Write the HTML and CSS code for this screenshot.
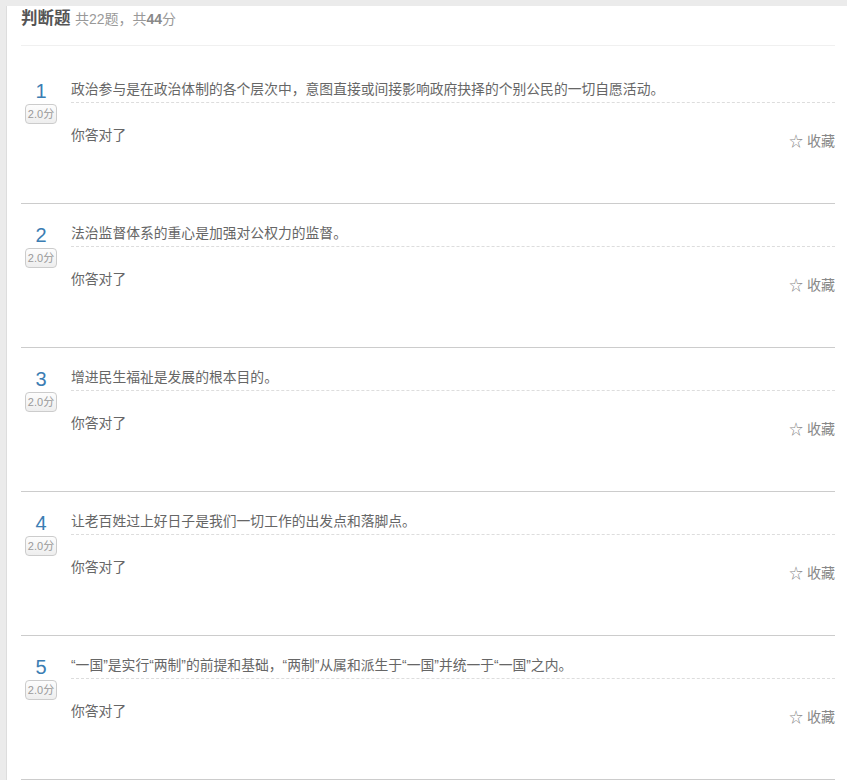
FILE: index.html
```html
<!DOCTYPE html>
<html>
<head>
<meta charset="utf-8">
<meta name="viewport" content="width=device-width, initial-scale=1.0">
<title>判断题</title>
<link rel="stylesheet" href="styles.css">
</head>
<body>
<div class="panel">
  <div class="type-head">
    <span class="type-name">判断题</span>
    <span class="type-info">共22题，共<b>44</b>分</span>
  </div>

  <div class="question">
    <div class="q-num">
      <span class="num">1</span>
      <span class="score">2.0分</span>
    </div>
    <div class="q-body">
      <div class="q-title">政治参与是在政治体制的各个层次中，意图直接或间接影响政府抉择的个别公民的一切自愿活动。</div>
      <div class="q-foot">
        <span class="result">你答对了</span>
        <span class="collect">☆ 收藏</span>
      </div>
    </div>
  </div>

  <div class="question">
    <div class="q-num">
      <span class="num">2</span>
      <span class="score">2.0分</span>
    </div>
    <div class="q-body">
      <div class="q-title">法治监督体系的重心是加强对公权力的监督。</div>
      <div class="q-foot">
        <span class="result">你答对了</span>
        <span class="collect">☆ 收藏</span>
      </div>
    </div>
  </div>

  <div class="question">
    <div class="q-num">
      <span class="num">3</span>
      <span class="score">2.0分</span>
    </div>
    <div class="q-body">
      <div class="q-title">增进民生福祉是发展的根本目的。</div>
      <div class="q-foot">
        <span class="result">你答对了</span>
        <span class="collect">☆ 收藏</span>
      </div>
    </div>
  </div>

  <div class="question">
    <div class="q-num">
      <span class="num">4</span>
      <span class="score">2.0分</span>
    </div>
    <div class="q-body">
      <div class="q-title">让老百姓过上好日子是我们一切工作的出发点和落脚点。</div>
      <div class="q-foot">
        <span class="result">你答对了</span>
        <span class="collect">☆ 收藏</span>
      </div>
    </div>
  </div>

  <div class="question">
    <div class="q-num">
      <span class="num">5</span>
      <span class="score">2.0分</span>
    </div>
    <div class="q-body">
      <div class="q-title">“一国”是实行“两制”的前提和基础，“两制”从属和派生于“一国”并统一于“一国”之内。</div>
      <div class="q-foot">
        <span class="result">你答对了</span>
        <span class="collect">☆ 收藏</span>
      </div>
    </div>
  </div>
</div>
</body>
</html>
```

FILE: styles.css
```css
html {
  overflow: hidden;
}
body {
  margin: 0;
  background: #ebebeb;
  font-family: "Liberation Sans", "Noto Sans CJK SC", sans-serif;
  color: #666;
}
.panel {
  margin: 6px 0 0 6px;
  background: #fff;
  border-left: 1px solid #ddd;
  padding: 0 12px 0 14px;
}
.type-head {
  line-height: 24px;
  padding-bottom: 14px;
  border-bottom: 1px solid #f0f0f0;
  margin-bottom: 14px;
}
.type-name {
  font-size: 16.5px;
  font-weight: bold;
  color: #555;
}
.type-info {
  font-size: 14px;
  color: #999;
}
.type-info b {
  color: #888;
}
.question {
  display: flex;
  padding: 20px 0 52px;
  border-bottom: 1px solid #ccc;
}
.q-num {
  width: 40px;
  flex-shrink: 0;
  display: flex;
  flex-direction: column;
  align-items: center;
  margin-right: 10px;
}
.num {
  font-size: 20px;
  line-height: 22px;
  color: #3b7db3;
}
.score {
  margin-top: 2px;
  width: 30px;
  height: 18px;
  line-height: 18px;
  text-align: center;
  font-size: 11px;
  color: #999;
  background: linear-gradient(#fdfdfd, #eee);
  border: 1px solid #ccc;
  border-radius: 4px;
}
.q-body {
  flex: 1;
}
.q-title {
  font-size: 13.8px;
  line-height: 20px;
  padding-bottom: 2px;
  border-bottom: 1px dashed #ddd;
}
.q-foot {
  display: flex;
  justify-content: space-between;
  align-items: flex-start;
  margin-top: 23px;
}
.result {
  font-size: 13.8px;
  line-height: 20px;
}
.collect {
  margin-top: 5px;
  font-size: 14px;
  line-height: 20px;
  color: #888;
}
```
